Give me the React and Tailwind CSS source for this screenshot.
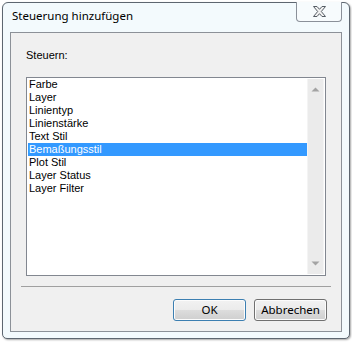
import { useState } from "react";

const items = [
  "Farbe",
  "Layer",
  "Linientyp",
  "Linienstärke",
  "Text Stil",
  "Bemaßungsstil",
  "Plot Stil",
  "Layer Status",
  "Layer Filter",
];

const CloseGlyph = () => (
  <svg width="15" height="13" viewBox="0 0 15 13">
    <path
      d="M1.5 1.5h3.5l2.5 2.8 2.5-2.8h3.5l-4.2 5 4.2 5h-3.5L7.5 8.7 5 11.5H1.5l4.2-5z"
      fill="#f2f2f2"
      stroke="#555c64"
      strokeWidth="1"
      strokeLinejoin="round"
    />
  </svg>
);

const Arrow = ({ up }) => (
  <svg width="9" height="5" viewBox="0 0 9 5">
    <path d={up ? "M0.5 4.5L4.5 0.5L8.5 4.5z" : "M0.5 0.5L4.5 4.5L8.5 0.5z"} fill="#a3a3a3" />
  </svg>
);

const WinButton = ({ children, isDefault }) => (
  <button
    className={`w-[73px] h-[22px] rounded-[3px] border text-[11.5px] text-black bg-[linear-gradient(#f2f2f2,#ebebeb_50%,#dddddd_50%,#cfcfcf)] shadow-[inset_0_0_0_1px_#fcfcfc] ${
      isDefault ? "border-[#3c7fb1]" : "border-[#707070]"
    }`}
  >
    {children}
  </button>
);

export default function App() {
  const [selected, setSelected] = useState(5);

  return (
    <div className="w-[352px] h-[342px] bg-white pt-[2px] pl-[2px] font-['Noto_Sans',sans-serif]">
      <div className="w-[348px] h-[337px] border border-[#5d6670] rounded-t-[6px] rounded-b-[5px] bg-[#f3fafd] shadow-[1px_1px_2px_rgba(0,0,0,0.35)] flex flex-col px-[7px]">
        <div className="h-[29px] flex justify-between items-start shrink-0">
          <span className="ml-[2px] mt-[6px] text-[11.5px] leading-[14px] text-black">
            Steuerung hinzufügen
          </span>
          <div className="-mt-[1px] w-[46px] h-[20px] border-x border-b border-[#8a9099] rounded-b-[4px] bg-[#f7fbfd] flex items-center justify-center">
            <CloseGlyph />
          </div>
        </div>

        <div className="w-[332px] h-[300px] border border-[#8c9198] bg-[#f0f0f0] flex flex-col font-['Liberation_Sans',sans-serif] text-[11px] text-black">
          <div className="ml-[15px] mt-[16px] leading-[13px]">Steuern:</div>

          <div className="ml-[15px] mt-[15px] w-[300px] h-[199px] border border-[#828790] bg-white flex">
            <div className="flex-1 pl-[1px]">
              {items.map((item, i) => (
                <div
                  key={item}
                  onClick={() => setSelected(i)}
                  className={`h-[13px] leading-[13px] pl-[1px] ${
                    i === selected ? "bg-[#3399ff] text-white" : ""
                  }`}
                >
                  {item}
                </div>
              ))}
            </div>
            <div className="w-[17px] my-[1px] mr-[1px] bg-[#ebebeb] border-x border-[#f4f4f4] flex flex-col items-center justify-between py-[8px]">
              <Arrow up />
              <Arrow />
            </div>
          </div>

          <div className="ml-[10px] mt-[10px] w-[310px] border-t border-[#a0a0a0]" />

          <div className="mt-[12px] mr-[14px] flex justify-end gap-[8px] font-['Noto_Sans',sans-serif]">
            <WinButton isDefault>OK</WinButton>
            <WinButton>Abbrechen</WinButton>
          </div>
        </div>
      </div>
    </div>
  );
}
